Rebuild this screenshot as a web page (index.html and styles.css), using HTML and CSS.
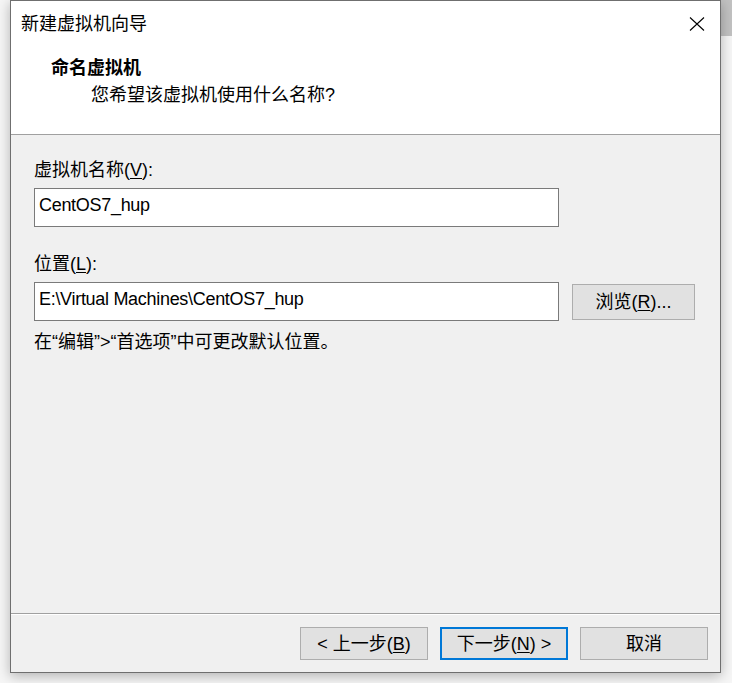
FILE: index.html
```html
<!DOCTYPE html>
<html lang="zh-CN">
<head>
<meta charset="utf-8">
<title>新建虚拟机向导</title>
<link rel="stylesheet" href="styles.css">
</head>
<body>
<div class="window">
  <div class="header">
    <div class="titlebar">
      <div class="title">新建虚拟机向导</div>
      <div class="close" aria-label="关闭">
        <svg width="16" height="16" viewBox="0 0 16 16"><path d="M1 1.5 L15 14.5 M15 1.5 L1 14.5" stroke="#000" stroke-width="1.1" fill="none"/></svg>
      </div>
    </div>
    <div class="heading">命名虚拟机</div>
    <div class="subheading">您希望该虚拟机使用什么名称?</div>
  </div>
  <div class="content">
    <div class="label">虚拟机名称(<u>V</u>):</div>
    <div class="textbox">CentOS7_hup</div>
    <div class="label second">位置(<u>L</u>):</div>
    <div class="row">
      <div class="textbox">E:\Virtual Machines\CentOS7_hup</div>
      <div class="button browse">浏览(<u>R</u>)...</div>
    </div>
    <div class="hint">在“编辑”&gt;“首选项”中可更改默认位置。</div>
  </div>
  <div class="footer">
    <div class="button">&lt; 上一步(<u>B</u>)</div>
    <div class="button primary">下一步(<u>N</u>) &gt;</div>
    <div class="button">取消</div>
  </div>
</div>
</body>
</html>
```

FILE: styles.css
```css
html, body {
  margin: 0;
  padding: 0;
}
body {
  width: 732px;
  height: 683px;
  overflow: hidden;
  background:
    linear-gradient(#c2c2c2, #c2c2c2) no-repeat right top / 12px 36px,
    #f6f6f6;
  font-family: "Liberation Sans", "Noto Sans CJK SC", sans-serif;
  font-size: 18px;
  color: #000;
}
.window {
  box-sizing: border-box;
  margin-left: 10px;
  width: 711px;
  height: 673px;
  border: 1px solid #6f6f6f;
  background: #f0f0f0;
  display: flex;
  flex-direction: column;
  box-shadow: 0 3px 12px rgba(0, 0, 0, 0.28);
}
.header {
  box-sizing: border-box;
  background: #fff;
  height: 134px;
  border-bottom: 1px solid #a0a0a0;
  padding-top: 11px;
  flex: none;
}
.titlebar {
  display: flex;
  justify-content: space-between;
  align-items: center;
  height: 24px;
  padding-left: 10px;
  padding-right: 15px;
}
.title {
  line-height: 24px;
}
.close {
  width: 16px;
  height: 16px;
  margin-top: -1px;
}
.close svg {
  display: block;
}
.heading {
  margin-top: 20px;
  margin-left: 40px;
  font-weight: bold;
  line-height: 24px;
}
.subheading {
  margin-top: 3px;
  margin-left: 80px;
  line-height: 24px;
}
.content {
  flex: 1;
  padding: 23px 0 0 23px;
}
.label {
  line-height: 24px;
  margin-bottom: 6px;
}
.label.second {
  margin-top: 25px;
}
.textbox {
  box-sizing: border-box;
  width: 525px;
  height: 39px;
  border: 1px solid #7a7a7a;
  background: #fff;
  padding: 4px 0 0 4px;
  line-height: 24px;
  font-family: "Liberation Sans", sans-serif;
  letter-spacing: -0.3px;
}
.row {
  display: flex;
  align-items: center;
  gap: 13px;
}
.hint {
  margin-top: 9px;
  line-height: 24px;
}
.footer {
  flex: none;
  box-sizing: border-box;
  height: 59px;
  border-top: 1px solid #a0a0a0;
  box-shadow: inset 0 1px 0 #fff;
  display: flex;
  justify-content: flex-end;
  gap: 12px;
  padding: 13px 12px 0 0;
}
.button {
  box-sizing: border-box;
  width: 128px;
  height: 33px;
  border: 1px solid #adadad;
  background: #e1e1e1;
  display: flex;
  align-items: center;
  justify-content: center;
  line-height: 24px;
}
.button.primary {
  border: 2px solid #0078d7;
}
.button.browse {
  width: 123px;
  height: 36px;
}
u {
  text-decoration-thickness: 1px;
  text-underline-offset: 2px;
}
```
